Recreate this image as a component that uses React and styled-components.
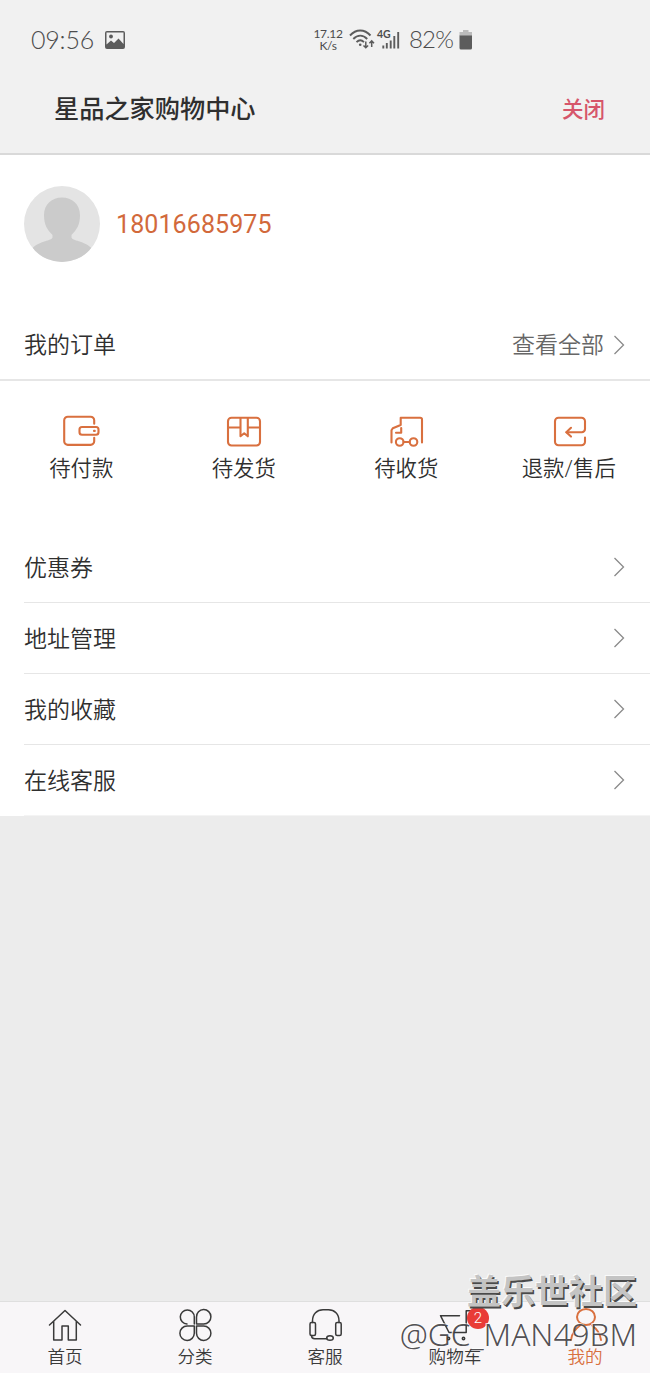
import React from "react";
import styled, { createGlobalStyle } from "styled-components";

const orders = [
  { label: "待付款", icon: "wallet" },
  { label: "待发货", icon: "box" },
  { label: "待收货", icon: "truck" },
  { label: "退款/售后", icon: "refund" },
];

const links = ["优惠券", "地址管理", "我的收藏", "在线客服"];

const tabs = [
  { label: "首页", icon: "home" },
  { label: "分类", icon: "category" },
  { label: "客服", icon: "service" },
  { label: "购物车", icon: "cart", badge: 2 },
  { label: "我的", icon: "user", active: true },
];

const icons = {
  wallet: (
    <>
      <path d="M33.2 9.8V6.3a3.6 3.6 0 0 0-3.6-3.6H6.8a3.6 3.6 0 0 0-3.6 3.6v21a3.6 3.6 0 0 0 3.6 3.6h22.8a3.6 3.6 0 0 0 3.6-3.6v-3.5" />
      <rect x="18.5" y="13" width="19" height="7.8" rx="2.5" />
      <path d="M33 16.9h.8" />
    </>
  ),
  box: (
    <>
      <rect x="4" y="3.8" width="32" height="27.7" rx="3.5" />
      <path d="M4 13.5h12.5M23.8 13.5H36M16.5 4v18.3l3.7-3 3.6 3V4" />
    </>
  ),
  truck: (
    <>
      <path d="M5.5 28.5V16.3l1.3-2 7.9-3.3V3.8h19.5a1.8 1.8 0 0 1 1.8 1.8v22.9" />
      <path d="M15.2 14v4.8H10" />
      <circle cx="13.7" cy="28" r="3.8" />
      <circle cx="27.5" cy="28" r="3.8" />
      <path d="M17.5 28h6.2" />
    </>
  ),
  refund: (
    <>
      <path d="M36 23.5v4.3a3.5 3.5 0 0 1-3.5 3.5h-23A3.5 3.5 0 0 1 6 27.8V7.3a3.5 3.5 0 0 1 3.5-3.5h23A3.5 3.5 0 0 1 36 7.3V15a3.2 3.2 0 0 1-3.2 3.2H17.5" />
      <path d="M22 13.8l-4.7 4.4 4.7 4.4" />
    </>
  ),
  home: (
    <path d="M4.5 17L20 2.5 35.5 17M8.7 13.5V32H17V18h6.3v14h8V13.5" />
  ),
  category: (
    <>
      <path d="M12 16a7 7 0 1 1 7.3-7v7" />
      <path d="M21.5 16V9a7.2 7.2 0 1 1 7.2 7z" />
      <path d="M19.3 18v7.3a7.2 7.2 0 1 1-7.2-7.3z" />
      <path d="M21.5 18v7.3a7.2 7.2 0 1 0 7.2-7.3z" />
    </>
  ),
  service: (
    <>
      <path d="M7.5 14.5V13C7.5 6 12 1.8 18 1.8h5.5C29.5 1.8 34 6 34 13v1.5" />
      <rect x="5" y="14.5" width="5.5" height="13" rx="1.5" />
      <rect x="30.7" y="14.5" width="5.5" height="13" rx="1.5" />
      <path d="M6.5 27.5c0 2 1.3 3.2 3.2 3.2h12" />
      <ellipse cx="25" cy="30" rx="3.3" ry="2.3" />
    </>
  ),
  cart: (
    <>
      <path d="M36 2.8h-4.8v21.7H14L5.5 7.7h19" />
      <circle cx="13.5" cy="30.5" r="1.2" />
      <circle cx="28.5" cy="30.5" r="1.2" />
    </>
  ),
  user: (
    <>
      <ellipse cx="21" cy="9" rx="9" ry="8" />
      <path d="M6 32c.8-7 4-11 9-14.5M27 17.5c5 3.5 8.200 7.500 9 14.500" />
    </>
  ),
};

const Icon = ({ name }) => <IconSvg viewBox="0 0 40 34">{icons[name]}</IconSvg>;

const Arrow = () => (
  <ArrowSvg viewBox="0 0 12 20">
    <path d="M1.5 1l9 9-9 9" />
  </ArrowSvg>
);

export default function App() {
  return (
    <>
      <GlobalStyle />
      <Page>
        <StatusBar>
          <Clock>09:56</Clock>
          <PictureIcon viewBox="0 0 20 18">
            <path
              fillRule="evenodd"
              d="M2 0h16a2 2 0 0 1 2 2v14a2 2 0 0 1-2 2H2a2 2 0 0 1-2-2V2a2 2 0 0 1 2-2zM1.5 1.5v12l4.5-4 3 2.5 4.5-4.5 5 5.5v-11.500z"
            />
            <circle cx="6" cy="5.5" r="1.9" />
          </PictureIcon>
          <Signals>
            <Speed>
              <span>17.12</span>
              <span>K/s</span>
            </Speed>
            <WifiIcon viewBox="0 0 26 21">
              <path d="M1 6.500C7-.2 15.500-.2 21.500 6.500M4.300 10C8.500 5.500 14 5.500 18.200 10M7.500 13.200c2.300-2.300 5.200-2.300 7.500 0" />
              <circle cx="11.2" cy="15.8" r="1.3" />
              <path
                className="thin"
                d="M16.8 12.5v6M14.5 16.5l2.3 2.3 2.3-2.3M22.7 18v-6M20.4 14.2l2.3-2.3 2.3 2.3"
              />
            </WifiIcon>
            <Cell>
              <svg viewBox="0 0 18 18">
                <path d="M1.3 14.5v3M4.8 12v5.5M8.7 9.5v8M12.3 5v12.5M16.2 1v16.5" />
              </svg>
              <Network>4G</Network>
            </Cell>
            <Percent>82%</Percent>
            <BatteryIcon viewBox="0 0 14 20">
              <path className="cap" d="M4 0h5.5v2H13v4H.5V2H4z" />
              <path d="M.5 5.5H13V18a1.5 1.5 0 0 1-1.5 1.5H2A1.5 1.5 0 0 1 .5 18z" />
            </BatteryIcon>
          </Signals>
        </StatusBar>
        <Header>
          <h1>星品之家购物中心</h1>
          <button>关闭</button>
        </Header>
        <Profile>
          <Avatar viewBox="0 0 76 76">
            <clipPath id="avatar">
              <circle cx="38" cy="38" r="38" />
            </clipPath>
            <g clipPath="url(#avatar)">
              <rect width="76" height="76" fill="#e4e4e4" />
              <path
                d="M38 11.5c10 0 18 7 18 17.5 0 10-3.500 15-8.500 20v2.500c1 3.500 12 3 20 10.500l-6 14h-47l-6-14c8-7.500 19-7 20-10.500V49c-5-5-8.500-10-8.500-20 0-10.500 8-17.500 18-17.500z"
                fill="#cbcbcb"
              />
            </g>
          </Avatar>
          <Phone>18016685975</Phone>
        </Profile>
        <OrderTitle>
          <h2>我的订单</h2>
          <span>查看全部</span>
          <Arrow />
        </OrderTitle>
        <Orders>
          {orders.map((item) => (
            <Order key={item.label}>
              <Icon name={item.icon} />
              <span>{item.label}</span>
            </Order>
          ))}
        </Orders>
        <Links>
          {links.map((label) => (
            <LinkRow key={label}>
              <span>{label}</span>
              <Arrow />
            </LinkRow>
          ))}
        </Links>
        <Filler />
        <TabBar>
          {tabs.map((tab) => (
            <Tab key={tab.label} $active={tab.active}>
              <Icon name={tab.icon} />
              <span>{tab.label}</span>
              {tab.badge && <Badge>{tab.badge}</Badge>}
            </Tab>
          ))}
        </TabBar>
        <Watermark>
          <strong>盖乐世社区</strong>
          <span>@GC_MAN49BM</span>
        </Watermark>
      </Page>
    </>
  );
}

const GlobalStyle = createGlobalStyle`
  * {
    box-sizing: border-box;
  }
  body {
    margin: 0;
    background: #ececec;
    font-family: Roboto, "Noto Sans CJK SC", sans-serif;
    font-weight: 350;
  }
  h1, h2 {
    margin: 0;
    font-weight: inherit;
  }
`;

const Page = styled.div`
  position: relative;
  display: flex;
  flex-direction: column;
  width: 650px;
  height: 1373px;
  overflow: hidden;
  color: #2f2f2f;
`;

const StatusBar = styled.div`
  display: flex;
  align-items: center;
  height: 79px;
  padding-left: 31px;
  background: #f1f1f1;
  color: #4c4c4c;
  font-family: Lato, sans-serif;
  font-weight: 300;
`;

const Clock = styled.span`
  width: 74px;
  padding-bottom: 2px;
  font-size: 25px;
  line-height: 30px;
  letter-spacing: -0.2px;
`;

const PictureIcon = styled.svg`
  width: 20px;
  height: 18px;
  fill: #5c5c5c;
`;

const Signals = styled.div`
  display: flex;
  align-items: center;
  margin-left: 189px;
`;

const Speed = styled.div`
  display: flex;
  flex-direction: column;
  align-items: center;
  width: 28px;
  margin-right: 7px;
  font-size: 12px;
  font-weight: 400;
  line-height: 12px;
  letter-spacing: -0.3px;
`;

const WifiIcon = styled.svg`
  width: 26px;
  height: 21px;
  fill: none;
  stroke: #5c5c5c;
  stroke-width: 1.9;
  circle {
    fill: #5c5c5c;
    stroke: none;
  }
  .thin {
    stroke-width: 1.5;
  }
`;

const Cell = styled.div`
  position: relative;
  width: 24px;
  height: 20px;
  margin-left: 2px;
  svg {
    display: block;
    width: 18px;
    height: 18px;
    margin: 1px 0 0 5px;
    fill: none;
    stroke: #5c5c5c;
    stroke-width: 1.9;
  }
`;

const Network = styled.span`
  position: absolute;
  top: -1px;
  left: 0;
  background: #f1f1f1;
  font-size: 10.5px;
  font-weight: 700;
  line-height: 10px;
`;

const Percent = styled.span`
  width: 43px;
  margin: 0 7px 0 8px;
  padding-bottom: 1px;
  font-size: 24px;
  line-height: 30px;
  letter-spacing: -0.8px;
`;

const BatteryIcon = styled.svg`
  width: 14px;
  height: 20px;
  fill: #5c5c5c;
  .cap {
    fill: #bbb;
  }
`;

const Header = styled.header`
  display: flex;
  align-items: center;
  justify-content: space-between;
  height: 76px;
  padding: 0 45px 12px 54px;
  border-bottom: 2px solid #d9d9d9;
  background: #f1f1f1;
  h1 {
    font-size: 25.2px;
    font-weight: 500;
    line-height: 36px;
  }
  button {
    padding: 0;
    border: 0;
    background: none;
    color: #d6566a;
    font-family: inherit;
    font-size: 21.5px;
    font-weight: 500;
    line-height: 32px;
  }
`;

const Profile = styled.section`
  display: flex;
  align-items: center;
  height: 155px;
  padding: 0 24px 17px;
  background: #fff;
`;

const Avatar = styled.svg`
  width: 76px;
  height: 76px;
`;

const Phone = styled.span`
  margin-left: 16px;
  padding-top: 2px;
  color: #d2693b;
  font-size: 25px;
  font-weight: 400;
  line-height: 30px;
  letter-spacing: 0.1px;
`;

const OrderTitle = styled.section`
  display: flex;
  align-items: center;
  height: 71px;
  padding: 0 25px 0 24px;
  border-bottom: 2px solid #e6e6e6;
  background: #fff;
  h2 {
    flex: 1;
    padding-top: 3px;
    font-size: 23px;
    line-height: 34px;
  }
  span {
    margin-right: 9px;
    padding-top: 2px;
    color: #666;
    font-size: 23px;
    line-height: 34px;
  }
`;

const ArrowSvg = styled.svg`
  width: 12px;
  height: 20px;
  fill: none;
  stroke: #8a8a8a;
  stroke-width: 1.3;
`;

const Orders = styled.section`
  display: grid;
  grid-template-columns: repeat(4, 1fr);
  height: 151px;
  padding-top: 33px;
  background: #fff;
`;

const IconSvg = styled.svg`
  width: 40px;
  height: 34px;
  fill: none;
  stroke: currentColor;
  stroke-linecap: round;
  stroke-linejoin: round;
`;

const Order = styled.div`
  display: flex;
  flex-direction: column;
  align-items: center;
  font-size: 21.4px;
  line-height: 30px;
  span {
    margin-top: 6px;
  }
  ${IconSvg} {
    color: #d9703f;
    stroke-width: 2.1;
  }
`;

const Links = styled.section`
  padding-left: 24px;
  background: #fff;
`;

const LinkRow = styled.div`
  display: flex;
  align-items: center;
  justify-content: space-between;
  height: 71px;
  padding-right: 25px;
  border-bottom: 1px solid #e6e6e6;
  font-size: 23px;
  line-height: 34px;
  span {
    padding-top: 3px;
  }
  &:last-child {
    border-bottom-color: #f4f4f4;
  }
`;

const Filler = styled.div`
  flex: 1;
  background: #ececec;
`;

const TabBar = styled.nav`
  display: grid;
  grid-template-columns: repeat(5, 1fr);
  height: 72px;
  border-top: 1px solid #dfdfdf;
  background: #f8f6f8;
`;

const Tab = styled.div`
  position: relative;
  display: flex;
  flex-direction: column;
  align-items: center;
  padding-top: 6px;
  color: ${(props) => (props.$active ? "#d9703f" : "#3a3a3a")};
  font-size: 17.6px;
  line-height: 24px;
  span {
    margin-top: 3px;
  }
  ${IconSvg} {
    stroke-width: ${(props) => (props.$active ? 2 : 1.5)};
  }
`;

const Badge = styled.em`
  position: absolute;
  top: 5px;
  left: 77px;
  width: 22px;
  height: 22px;
  border-radius: 50%;
  background: #e93c37;
  color: #fff;
  font-size: 15px;
  font-style: normal;
  line-height: 22px;
  text-align: center;
`;

const Watermark = styled.div`
  position: absolute;
  right: 13px;
  bottom: 18px;
  display: flex;
  flex-direction: column;
  align-items: flex-end;
  white-space: nowrap;
  strong {
    color: #c4c4c4;
    font-size: 34px;
    font-weight: 700;
    line-height: 42px;
    text-shadow: 1.5px 1.5px 0 #4a4a4a, -1px -1px 0 #fafafa;
  }
  span {
    color: rgba(60, 58, 62, 0.9);
    font-family: "Noto Sans", sans-serif;
    font-size: 31.6px;
    font-weight: 300;
    line-height: 42px;
    text-shadow: -1px -1px 0 rgba(255, 255, 255, 0.8);
  }
`;
